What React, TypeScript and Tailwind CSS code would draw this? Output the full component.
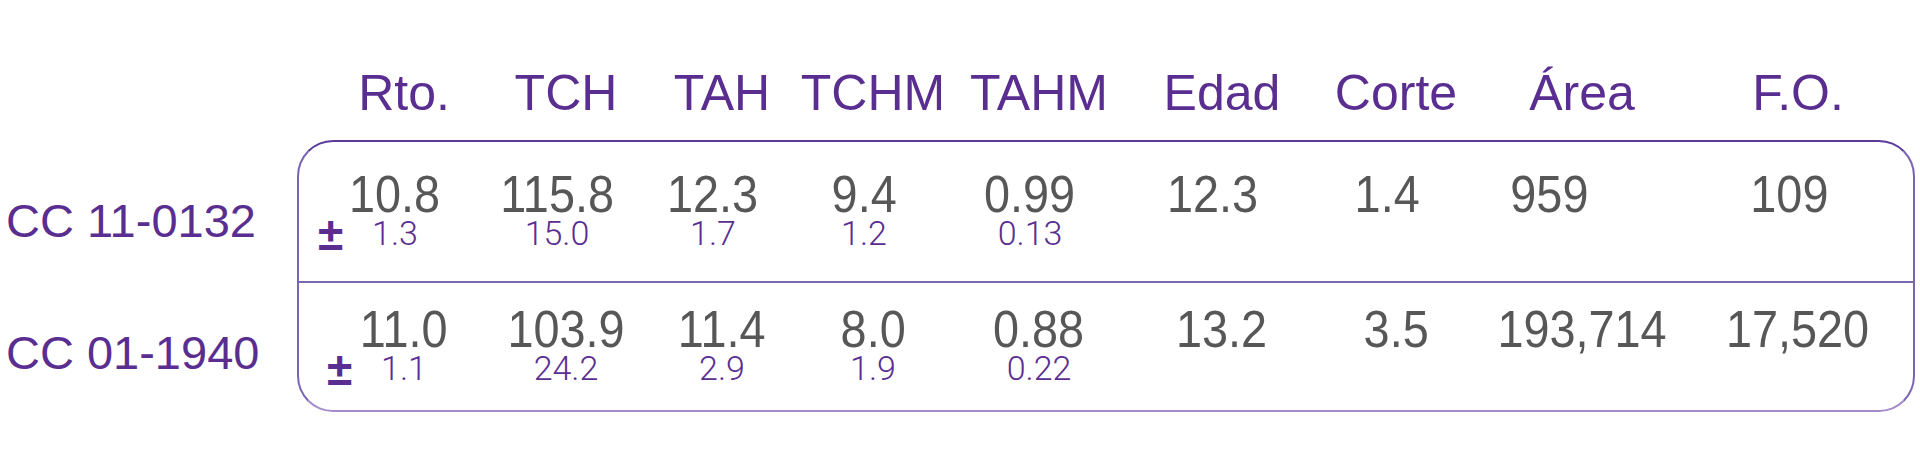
import React from "react";

const cols =
  "grid grid-cols-[160px_164px_148px_154px_178px_188px_160px_212px_220px]";

const headers = ["Rto.", "TCH", "TAH", "TCHM", "TAHM", "Edad", "Corte", "Área", "F.O."];

type Cell = { big: string; small?: string; extra?: string };

const row1: Cell[] = [
  { big: "10.8", small: "1.3" },
  { big: "115.8", small: "15.0" },
  { big: "12.3", small: "1.7" },
  { big: "9.4", small: "1.2" },
  { big: "0.99", small: "0.13" },
  { big: "12.3" },
  { big: "1.4" },
  { big: "959", extra: "pr-[48px]" },
  { big: "109" },
];

const row2: Cell[] = [
  { big: "11.0", small: "1.1" },
  { big: "103.9", small: "24.2" },
  { big: "11.4", small: "2.9" },
  { big: "8.0", small: "1.9" },
  { big: "0.88", small: "0.22" },
  { big: "13.2" },
  { big: "3.5" },
  { big: "193,714" },
  { big: "17,520" },
];

function DataCell({ cell, first }: { cell: Cell; first: boolean }) {
  return (
    <div className={`relative flex flex-col items-center ${cell.extra ?? ""}`}>
      <span className="inline-block scale-x-90 whitespace-nowrap font-['Liberation_Sans',Arial,sans-serif] text-[52px] leading-[52px] text-[#575757]">
        {cell.big}
      </span>
      {cell.small && (
        <span className="-mt-[4px] whitespace-nowrap font-['Roboto','Lato',sans-serif] text-[34px] font-light leading-[34px] text-[#5a2e91]">
          {cell.small}
        </span>
      )}
      {first && (
        <span className="absolute left-[3px] top-[43px] font-['Liberation_Sans',Arial,sans-serif] text-[46px] font-bold leading-[46px] text-[#5a2e91]">
          ±
        </span>
      )}
    </div>
  );
}

export default function App() {
  return (
    <div className="h-[474px] w-[1920px] overflow-hidden bg-white">
      <div className={`${cols} ml-[324px] pt-[68px]`}>
        {headers.map((h) => (
          <div
            key={h}
            className="text-center whitespace-nowrap font-['Liberation_Sans_Narrow','Arial_Narrow','Liberation_Sans',sans-serif] text-[50px] leading-[50px] text-[#5a2e91]"
          >
            {h}
          </div>
        ))}
      </div>

      <div className="mt-[22px] flex items-start">
        <div className="flex w-[297px] flex-col pl-[6px] font-['Liberation_Sans',Arial,sans-serif] text-[47px] leading-[47px] text-[#5a2e91]">
          <div className="mt-[57px] whitespace-nowrap">CC 11-0132</div>
          <div className="mt-[85px] whitespace-nowrap">CC 01-1940</div>
        </div>

        <div className="h-[272px] w-[1618px] rounded-[36px] border-2 border-t-[#5b3a9c] border-r-[#7c62b2] border-b-[#a58bc9] border-l-[#7c62b2]">
          <div className="h-[139px] pt-[26px] pl-[16px]">
            <div className={cols}>
              {row1.map((c, i) => (
                <DataCell key={i} cell={c} first={i === 0} />
              ))}
            </div>
          </div>
          <div className="h-[2px] bg-[#7b68b0]" />
          <div className="pt-[20px] pl-[25px]">
            <div className={cols}>
              {row2.map((c, i) => (
                <DataCell key={i} cell={c} first={i === 0} />
              ))}
            </div>
          </div>
        </div>
      </div>
    </div>
  );
}
